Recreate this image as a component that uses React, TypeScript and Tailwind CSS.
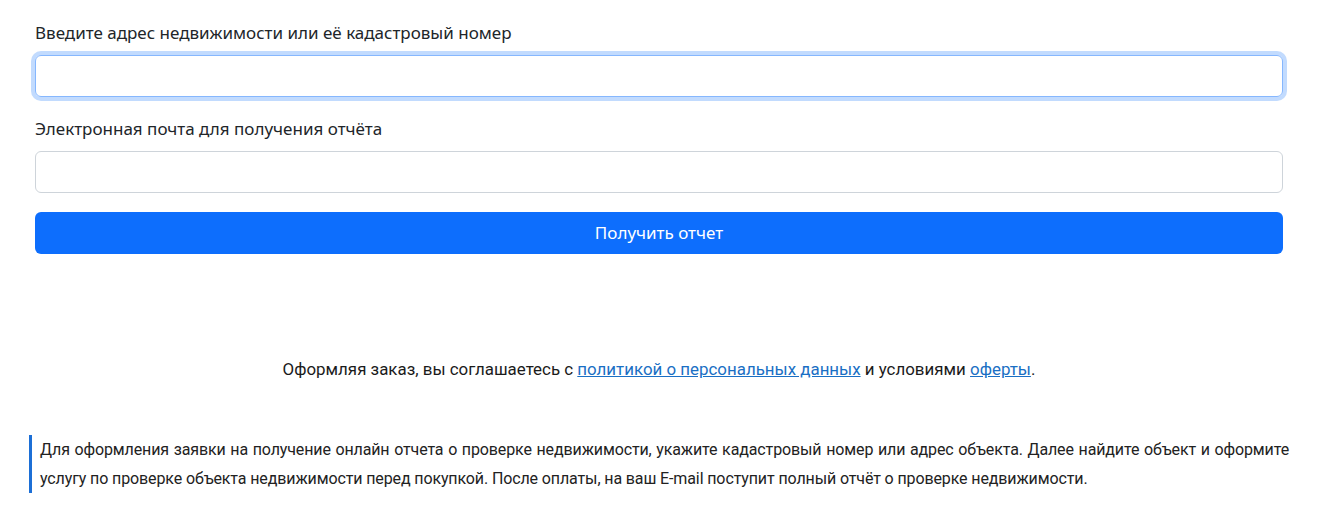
import React from "react";

export default function App() {
  return (
    <div className="w-[1329px] h-[521px] bg-white overflow-hidden">
      <div className="pt-[21px] pl-[35px] w-[1283px]">
        <div className="flex flex-col">
          <label className="text-[17px] leading-[24px] text-[#212529] [font-family:'Noto_Sans',sans-serif]">
            Введите адрес недвижимости или её кадастровый номер
          </label>
          <input
            className="mt-[10px] h-[42px] w-full rounded-[6px] border border-[#86b7fe] shadow-[0_0_0_4px_rgba(13,110,253,0.25)] outline-none"
            type="text"
          />
          <label className="mt-[20px] text-[17px] leading-[24px] text-[#212529] [font-family:'Noto_Sans',sans-serif]">
            Электронная почта для получения отчёта
          </label>
          <input
            className="mt-[10px] h-[42px] w-full rounded-[6px] border border-[#ced4da] outline-none"
            type="email"
          />
          <button className="mt-[19px] h-[42px] w-full rounded-[6px] bg-[#0d6efd] text-white text-[17px] leading-[24px] [font-family:'Noto_Sans',sans-serif]">
            Получить отчет
          </button>
        </div>
        <p className="mt-[103px] text-center text-[16.9px] leading-[24px] text-[#1b1b1b] [font-family:Roboto,sans-serif]">
          Оформляя заказ, вы соглашаетесь с{" "}
          <a className="text-[#1a6fc4] underline">политикой о персональных данных</a> и условиями{" "}
          <a className="text-[#1a6fc4] underline">оферты</a>.
        </p>
      </div>
      <div className="mt-[54px] ml-[29px] w-[1260px] border-l-[3px] border-[#1c6fd6] pl-[8px] text-justify text-[16px] tracking-[-0.12px] leading-[29px] text-[#222] [font-family:Roboto,sans-serif]">
        Для оформления заявки на получение онлайн отчета о проверке недвижимости, укажите кадастровый номер или адрес объекта. Далее найдите объект и оформите услугу по проверке объекта недвижимости перед покупкой. После оплаты, на ваш E-mail поступит полный отчёт о проверке недвижимости.
      </div>
    </div>
  );
}
